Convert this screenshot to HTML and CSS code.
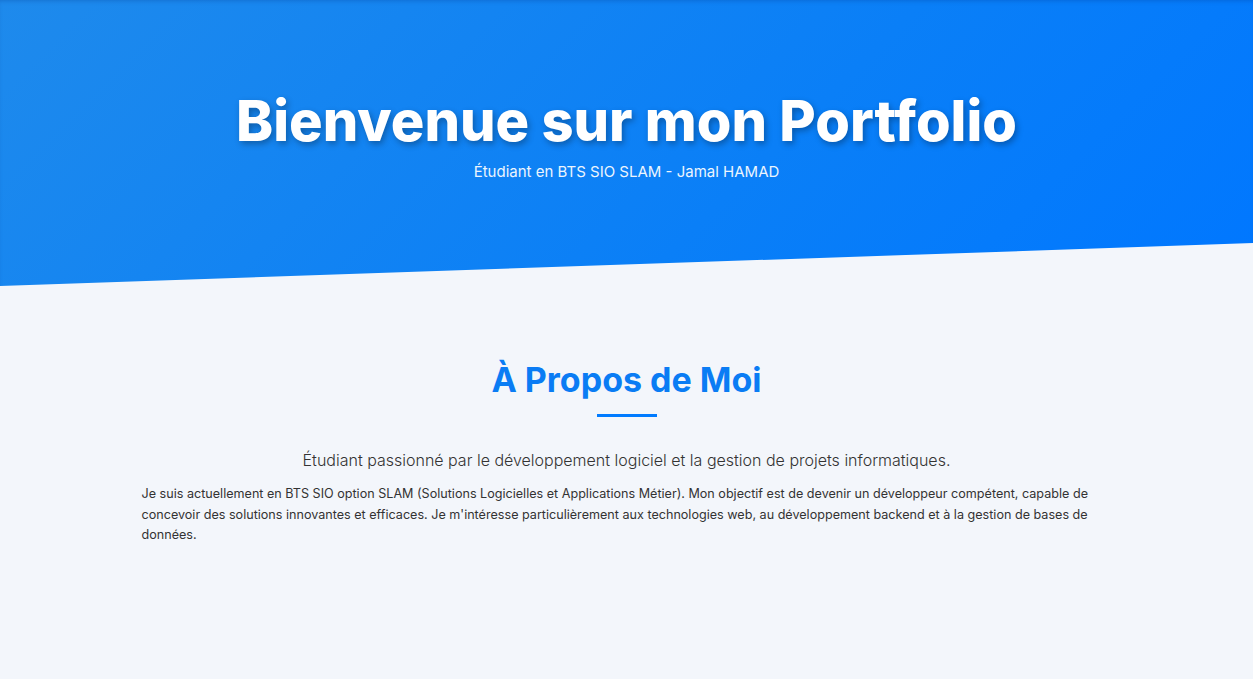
FILE: index.html
```html
<!DOCTYPE html>
<html lang="fr">
<head>
<meta charset="utf-8">
<title>Portfolio - Jamal HAMAD</title>
<link rel="stylesheet" href="styles.css">
</head>
<body>
<header class="hero">
  <h1 class="hero-title">Bienvenue sur mon Portfolio</h1>
  <p class="hero-subtitle">Étudiant en BTS SIO SLAM - Jamal HAMAD</p>
</header>
<main>
  <section class="about">
    <div class="container">
      <h2 class="section-title">À Propos de Moi</h2>
      <div class="title-bar"></div>
      <p class="lead">Étudiant passionné par le développement logiciel et la gestion de projets informatiques.</p>
      <p class="text">Je suis actuellement en BTS SIO option SLAM (Solutions Logicielles et Applications Métier). Mon objectif est de devenir un développeur compétent, capable de concevoir des solutions innovantes et efficaces. Je m'intéresse particulièrement aux technologies web, au développement backend et à la gestion de bases de données.</p>
    </div>
  </section>
</main>
</body>
</html>
```
FILE: styles.css
```css
* { box-sizing: border-box; }
html, body { margin: 0; padding: 0; }
body {
  font-family: "Inter", "Open Sans", sans-serif;
  background: #f3f6fb;
  color: #333;
}
.hero {
  height: 286px;
  background: linear-gradient(135deg, #1e8aec 0%, #0a7ff7 60%, #0077ff 100%);
  clip-path: polygon(0 0, 100% 0, 100% 85%, 0 100%);
  box-shadow: inset 0 3px 4px -2px rgba(0, 40, 120, 0.25);
  display: flex;
  flex-direction: column;
  align-items: center;
  padding-top: 88px;
  color: #fff;
  text-align: center;
}
.hero-title {
  margin: 0;
  font-size: 56px;
  line-height: 66px;
  font-weight: 800;
  letter-spacing: 0;
  text-shadow: 2px 3px 6px rgba(0, 0, 0, 0.3);
}
.hero-subtitle {
  margin: 7px 0 0;
  font-size: 15px;
  line-height: 22px;
  font-weight: 400;
  opacity: 0.92;
}
.about { padding: 73px 0 60px; }
.container {
  max-width: 1000px;
  margin: 0 auto;
  padding: 0 15px;
  display: flex;
  flex-direction: column;
  align-items: center;
}
.section-title {
  margin: 0;
  font-size: 34px;
  line-height: 42px;
  font-weight: 700;
  color: #0a7cf4;
}
.title-bar {
  width: 60px;
  height: 3px;
  background: #007bff;
  margin-top: 13px;
}
.lead {
  margin: 31px 0 0;
  font-size: 16px;
  line-height: 24px;
  font-weight: 300;
  color: #333;
  text-align: center;
}
.text {
  align-self: stretch;
  margin: 12px 0 0;
  font-size: 12.6px;
  line-height: 20.5px;
  color: #333;
}
```
